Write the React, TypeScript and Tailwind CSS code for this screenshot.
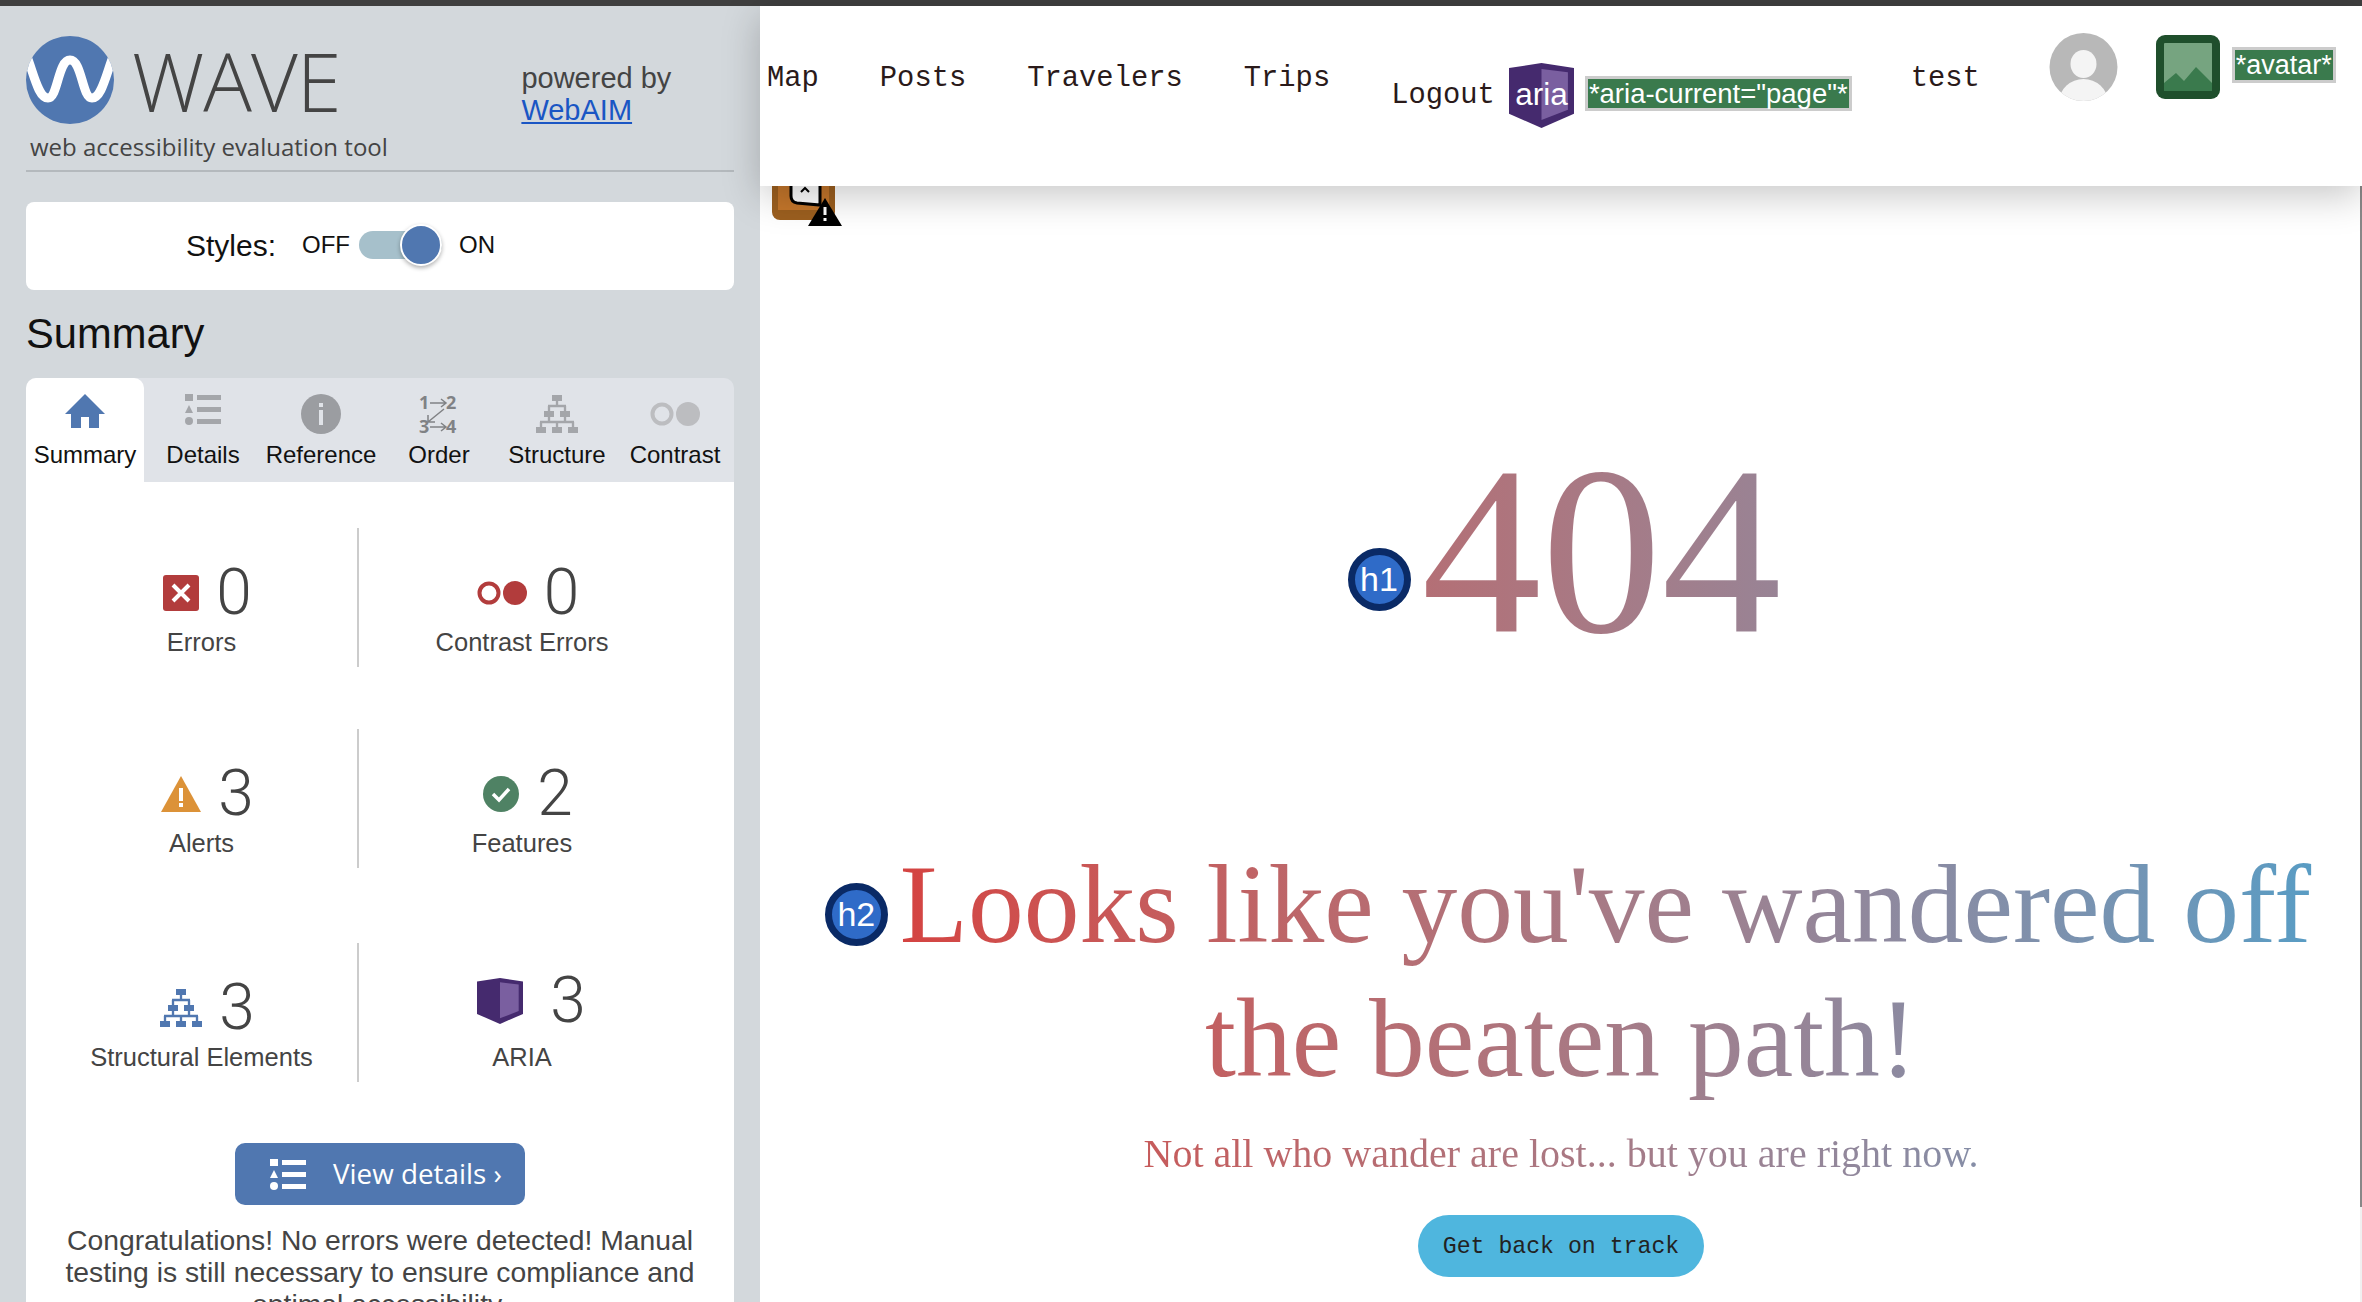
import type { ReactNode } from "react";

function Logo() {
  return (
    <svg viewBox="0 0 88 88" className="w-[88px] h-[88px] shrink-0">
      <clipPath id="logoClip">
        <circle cx="44" cy="44" r="44" />
      </clipPath>
      <circle cx="44" cy="44" r="44" fill="#5077b0" />
      <path
        d="M0 18C8 38 12 62 22 62C32 62 32 24 44 24C56 24 56 62 66 62C76 62 80 38 88 18"
        fill="none"
        stroke="#fff"
        strokeWidth="9"
        clipPath="url(#logoClip)"
      />
    </svg>
  );
}

function ListIcon({ color, className }: { color: string; className: string }) {
  return (
    <svg viewBox="0 0 36 31" className={className} fill={color}>
      <rect x="0" y="0" width="8" height="7" />
      <path d="M4 11L8 19H0Z" />
      <circle cx="4" cy="27" r="4" />
      <rect x="12" y="1" width="24" height="5" />
      <rect x="12" y="13" width="24" height="5" />
      <rect x="12" y="25" width="24" height="5" />
    </svg>
  );
}

function OrgIcon({ color, className }: { color: string; className: string }) {
  return (
    <svg viewBox="0 0 126 114" className={className} fill={color}>
      <rect x="48" y="0" width="30" height="18" />
      <rect x="24" y="48" width="30" height="18" />
      <rect x="72" y="48" width="30" height="18" />
      <rect x="0" y="96" width="30" height="18" />
      <rect x="48" y="96" width="30" height="18" />
      <rect x="96" y="96" width="30" height="18" />
      <path
        d="M63 18V33M36 33H90M39 33V48M87 33V48M39 66V81M87 66V81M12 81H114M15 81V96M63 81V96M111 81V96"
        fill="none"
        stroke={color}
        strokeWidth="7"
      />
    </svg>
  );
}

function AriaBox({ className, label }: { className: string; label?: boolean }) {
  return (
    <svg viewBox="0 0 64 64" className={className}>
      <path d="M0 5L32 0L64 5V50L32 64L0 50Z" fill="#452a6e" />
      <path d="M32 6L58 9V46L32 56Z" fill="#7a5fa0" />
      {label && (
        <text x="32" y="41" textAnchor="middle" fill="#fff" fontSize="31" fontFamily="Liberation Sans, sans-serif">
          aria
        </text>
      )}
    </svg>
  );
}

function Tab({ label, active, children }: { label: string; active?: boolean; children: ReactNode }) {
  return (
    <div className={`w-[118px] flex flex-col items-center pt-[16px] ${active ? "bg-white rounded-t-[10px]" : ""}`}>
      <div className="h-[40px] flex items-center justify-center">{children}</div>
      <span className="mt-[7px] text-[24px] leading-[28px] text-[#111] whitespace-nowrap">{label}</span>
    </div>
  );
}

function Stat({
  icon,
  count,
  label,
  gap,
  lift,
}: {
  icon: ReactNode;
  count: number;
  label: string;
  gap: string;
  lift?: boolean;
}) {
  return (
    <div className={`flex flex-col items-center ${lift ? "pt-[28px]" : "pt-[35px]"}`}>
      <div className={`flex items-center h-[60px] ${gap} ${lift ? "ml-[18px]" : "ml-[12px]"}`}>
        {icon}
        <span className="font-['Roboto',sans-serif] font-light text-[64px] leading-[60px] text-[#444]">{count}</span>
      </div>
      <span className={`${lift ? "mt-[11px]" : "mt-[4px]"} text-[25.5px] leading-[30px] text-[#444] whitespace-nowrap`}>{label}</span>
    </div>
  );
}

function StatRow({ className, left, right }: { className: string; left: ReactNode; right: ReactNode }) {
  return (
    <div className={`ml-[20px] flex h-[139px] ${className}`}>
      <div className="w-[313px] border-r-2 border-[#ccc]">{left}</div>
      <div className="w-[326px]">{right}</div>
    </div>
  );
}

function Sidebar() {
  return (
    <aside className="w-[760px] shrink-0 bg-[#d3d8dc] px-[26px] pt-[30px] overflow-hidden">
      <div className="flex items-start h-[87px]">
        <Logo />
        <span className="ml-[18px] mt-[15px] font-['Open_Sans',sans-serif] font-light text-[81px] leading-[60px] text-[#444] tracking-[-1px]">WAVE</span>
        <div className="ml-[181px] mt-[26px] text-[29px] leading-[32px] text-[#444] whitespace-nowrap">
          <div>powered by</div>
          <div className="text-[#1a56c4] underline">WebAIM</div>
        </div>
      </div>
      <div className="mt-[7px] pl-[4px] font-['Open_Sans',sans-serif] text-[24px] leading-[34px] text-[#444]">web accessibility evaluation tool</div>
      <div className="mt-[6px] h-[2px] bg-[#b4b9bd]" />

      <div className="mt-[30px] h-[88px] pb-[2px] bg-white rounded-[8px] flex items-center pl-[160px]">
        <span className="text-[30px] text-[#111]">Styles:</span>
        <span className="ml-[26px] text-[24px] text-[#111]">OFF</span>
        <div className="ml-[9px] w-[83px] h-[28px] rounded-full bg-[#a6c0cb] flex items-center justify-end">
          <div className="w-[42px] h-[42px] rounded-full bg-[#5077b0] border-2 border-white shadow-[0_2px_4px_rgba(0,0,0,0.3)]" />
        </div>
        <span className="ml-[17px] text-[24px] text-[#111]">ON</span>
      </div>

      <h2 className="mt-[20px] text-[41.7px] leading-[48px] text-[#111]">Summary</h2>

      <div className="mt-[20px] flex h-[104px] bg-[#e0e3e8] rounded-t-[10px]">
        <Tab label="Summary" active>
          <svg viewBox="0 0 40 34" className="w-[40px] h-[34px] mb-[6px]" fill="#5077b0">
            <path d="M20 0L40 20H34V34H24V23H16V34H6V20H0Z" />
          </svg>
        </Tab>
        <Tab label="Details">
          <ListIcon color="#a4a6aa" className="w-[36px] h-[31px] mb-[9px]" />
        </Tab>
        <Tab label="Reference">
          <svg viewBox="0 0 40 40" className="w-[40px] h-[40px]">
            <circle cx="20" cy="20" r="20" fill="#9b9da1" />
            <rect x="18" y="9" width="4" height="4" fill="#e0e3e8" />
            <rect x="18" y="16" width="4" height="15" fill="#e0e3e8" />
          </svg>
        </Tab>
        <Tab label="Order">
          <svg viewBox="-4 -8 48 56" className="w-[48px] h-[56px] shrink-0" fontFamily="Open Sans, sans-serif" fontWeight="700" fontSize="18" fill="#808285">
            <text x="0" y="15">1</text>
            <text x="27" y="15">2</text>
            <text x="0" y="39">3</text>
            <text x="27" y="39">4</text>
            <path d="M11 9H26M22 5L27 9L22 13M11 33H26M22 29L27 33L22 37M25 15L9 28M9 21V28H16" fill="none" stroke="#808285" strokeWidth="1.5" />
          </svg>
        </Tab>
        <Tab label="Structure">
          <OrgIcon color="#a4a6aa" className="w-[42px] h-[38px]" />
        </Tab>
        <Tab label="Contrast">
          <svg viewBox="0 0 50 24" className="w-[50px] h-[24px]">
            <circle cx="12" cy="12" r="9.5" fill="none" stroke="#bcbdc0" strokeWidth="4" />
            <circle cx="38" cy="12" r="12" fill="#bcbdc0" />
          </svg>
        </Tab>
      </div>

      <div className="bg-white pt-[46px] h-[820px]">
        <StatRow
          className=""
          left={
            <Stat
              gap="gap-[17px]"
              count={0}
              label="Errors"
              icon={
                <svg viewBox="0 0 36 36" className="w-[36px] h-[36px]">
                  <rect width="36" height="36" rx="3" fill="#b23c3c" />
                  <path d="M10 10L26 26M26 10L10 26" stroke="#fff" strokeWidth="4" />
                </svg>
              }
            />
          }
          right={
            <Stat
              gap="gap-[17px]"
              count={0}
              label="Contrast Errors"
              icon={
                <svg viewBox="0 0 50 24" className="w-[50px] h-[24px]">
                  <circle cx="12" cy="12" r="9.5" fill="none" stroke="#b23c3c" strokeWidth="4" />
                  <circle cx="38" cy="12" r="12" fill="#b23c3c" />
                </svg>
              }
            />
          }
        />
        <StatRow
          className="mt-[62px]"
          left={
            <Stat
              gap="gap-[17px]"
              count={3}
              label="Alerts"
              icon={
                <svg viewBox="0 0 40 36" className="w-[40px] h-[36px]">
                  <path d="M20 0L40 36H0Z" fill="#dc9238" />
                  <rect x="18" y="12" width="4" height="13" fill="#fff" />
                  <rect x="18" y="27" width="4" height="4" fill="#fff" />
                </svg>
              }
            />
          }
          right={
            <Stat
              gap="gap-[18px]"
              count={2}
              label="Features"
              icon={
                <svg viewBox="0 0 36 36" className="w-[36px] h-[36px]">
                  <circle cx="18" cy="18" r="18" fill="#4f8264" />
                  <path d="M10 18L16 24L26 13" fill="none" stroke="#fff" strokeWidth="3.5" />
                </svg>
              }
            />
          }
        />
        <StatRow
          className="mt-[75px]"
          left={
            <Stat
              gap="gap-[17px]"
              count={3}
              label="Structural Elements"
              icon={<OrgIcon color="#5077b0" className="w-[42px] h-[38px]" />}
            />
          }
          right={<Stat lift gap="gap-[26px]" count={3} label="ARIA" icon={<AriaBox className="w-[48px] h-[46px]" />} />}
        />

        <div className="mt-[61px] mx-auto w-[290px] h-[62px] rounded-[10px] bg-[#5077b0] flex items-center pl-[35px] text-white">
          <ListIcon color="#fff" className="w-[36px] h-[31px]" />
          <span className="ml-[27px] font-['Open_Sans',sans-serif] text-[27.8px] whitespace-nowrap">View details ›</span>
        </div>

        <p className="mt-[19px] px-[26px] text-center text-[28.3px] leading-[32px] text-[#444]">
          Congratulations! No errors were detected! Manual testing is still necessary to ensure compliance and optimal accessibility.
        </p>
      </div>
    </aside>
  );
}

function Heading({ label, className }: { label: string; className: string }) {
  return (
    <span className={`inline-flex items-center justify-center w-[63px] h-[63px] rounded-full bg-[#2f6bc8] border-[7px] border-[#0a2a66] font-['Liberation_Sans',sans-serif] text-[34px] leading-none text-white ${className}`}>
      {label}
    </span>
  );
}

function NavBar() {
  const linkClass = "mt-[53px] text-[28.8px] leading-[40px] text-[#2a1a1a] whitespace-nowrap";
  return (
    <nav className="relative z-10 h-[180px] shrink-0 bg-white flex items-start pl-[7px] font-['Liberation_Mono',monospace] shadow-[0_10px_36px_rgba(0,0,0,0.22)]">
      <span className={linkClass}>Map</span>
      <span className={`${linkClass} ml-[61px]`}>Posts</span>
      <span className={`${linkClass} ml-[61px]`}>Travelers</span>
      <span className={`${linkClass} ml-[61px]`}>Trips</span>
      <span className="mt-[70px] ml-[61px] text-[28.8px] leading-[40px] text-[#2a1a1a]">Logout</span>
      <AriaBox label className="mt-[57px] ml-[14px] w-[65px] h-[65px] shrink-0" />
      <span className="mt-[70px] ml-[11px] border-[3px] border-[#ccc] bg-[#3a7a4d] px-[1px] font-['Liberation_Sans',sans-serif] text-[27.5px] leading-[29px] text-white whitespace-nowrap">*aria-current="page"*</span>
      <span className={`${linkClass} ml-[59px]`}>test</span>
      <svg viewBox="0 0 69 68" className="mt-[27px] ml-[69px] w-[69px] h-[68px] shrink-0">
        <clipPath id="avatarClip">
          <circle cx="34.5" cy="34" r="34" />
        </clipPath>
        <circle cx="34.5" cy="34" r="34" fill="#b8b8b8" />
        <ellipse cx="34.5" cy="31" rx="13" ry="14" fill="#f4f4f4" />
        <ellipse cx="34.5" cy="68" rx="24" ry="22" fill="#f4f4f4" clipPath="url(#avatarClip)" />
      </svg>
      <svg viewBox="0 0 64 64" className="mt-[29px] ml-[38px] w-[64px] h-[64px] shrink-0">
        <rect width="64" height="64" rx="9" fill="#1f4f2c" />
        <rect x="8" y="8" width="48" height="48" rx="1" fill="#76a480" />
        <path d="M8 48L20 38L28 46L40 32L56 48V56H8Z" fill="#3a7a4d" />
      </svg>
      <span className="mt-[41px] ml-[12px] border-[3px] border-[#ccc] bg-[#3a7a4d] px-[1px] font-['Liberation_Sans',sans-serif] text-[27px] leading-[30px] text-white whitespace-nowrap">*avatar*</span>
    </nav>
  );
}

export default function App() {
  const gradient = "bg-linear-to-r from-[#dc2f2f] to-[#4f9ec8] bg-clip-text text-transparent";
  return (
    <div className="w-[2362px] h-[1302px] overflow-hidden flex flex-col font-['Liberation_Sans',sans-serif]">
      <div className="h-[6px] shrink-0 bg-[#3f3f3f]" />
      <div className="flex flex-1 min-h-0">
        <Sidebar />
        <div className="flex-1 flex flex-col min-w-0 relative">
          <NavBar />
          {/* icon stuck half under the nav */}
          <svg viewBox="0 0 70 60" className="absolute left-[12px] top-[160px] w-[70px] h-[60px]">
            <rect x="0" y="0" width="63" height="54" rx="8" fill="#9c5f1f" />
            <rect x="6" y="0" width="51" height="44" fill="#c4762b" />
            <path d="M19 0V30Q19 36 25 37L48 39V0Z" fill="#fff" stroke="#000" strokeWidth="3" />
            <path d="M29 26L33 22L37 26" fill="none" stroke="#000" strokeWidth="2" />
            <path d="M53 32L70 60H36Z" fill="#000" />
            <rect x="51.5" y="41" width="3" height="8" fill="#fff" />
            <rect x="51.5" y="52" width="3" height="3" fill="#fff" />
          </svg>
          <main className="flex flex-col items-center font-['Liberation_Serif',serif] text-center">
            <h1 className={`w-full mt-[245px] text-[240px] leading-[240px] pl-[7px] ${gradient}`}>
              <Heading label="h1" className="align-[41px] mr-[11px]" />
              404
            </h1>
            <h2 className={`w-full mt-[167px] text-[111.5px] leading-[134.4px] ${gradient}`}>
              <Heading label="h2" className="align-[16px] mr-[12px] ml-[14px]" />
              Looks like you've wandered off
              <br />
              the beaten path!
            </h2>
            <p className={`w-full mt-[22px] text-[40px] leading-[50px] ${gradient}`}>Not all who wander are lost... but you are right now.</p>
            <div className="mt-[36px] w-[286px] h-[62px] rounded-full bg-[#4fb6de] flex items-center justify-center pt-[3px] font-['Liberation_Mono',monospace] text-[23.2px] text-[#222]">
              Get back on track
            </div>
          </main>
          <div className="absolute right-0 top-0 bottom-0 w-[2px] bg-[#f0f0f0]">
            <div className="h-[1201px] bg-[#888]" />
          </div>
        </div>
      </div>
    </div>
  );
}
